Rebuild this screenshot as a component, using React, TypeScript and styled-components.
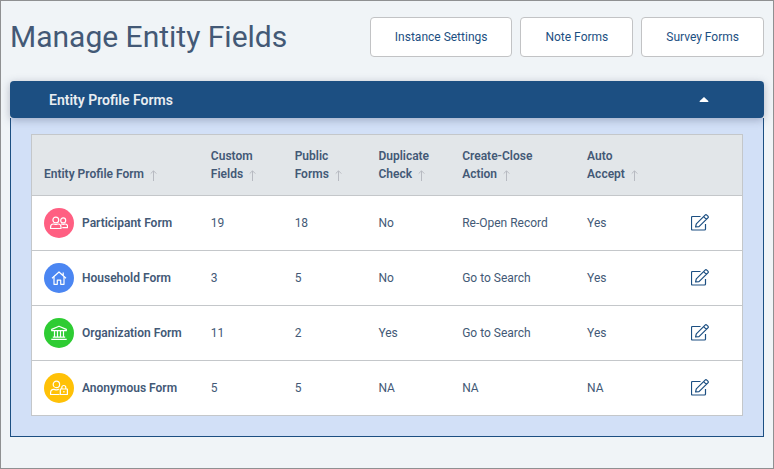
import React, { useState } from "react";
import styled, { createGlobalStyle } from "styled-components";

const navy = "#1c4f82";
const slate = "#435976";
const line = "#c4c7ca";

const GlobalStyle = createGlobalStyle`
  * { box-sizing: border-box; }
  html, body, #root { height: 100%; }
  body {
    margin: 0;
    background: #f0f4f7;
    color: ${slate};
    font-family: Roboto, "Liberation Sans", sans-serif;
    font-size: 12px;
    line-height: 18px;
  }
  button { font: inherit; color: inherit; cursor: pointer; }
`;

const Page = styled.main`
  min-height: 100%;
  padding: 16px 9px 24px;
  border: 1px solid #8f9092;
`;

const TopBar = styled.header`
  display: flex;
  align-items: center;
  justify-content: space-between;
  gap: 16px;
  margin-bottom: 24px;
`;

const Title = styled.h1`
  margin: 0;
  font-size: 30px;
  line-height: 40px;
  font-weight: 400;
  white-space: nowrap;
`;

const Actions = styled.nav`
  display: flex;
  gap: 8px;
`;

const ActionButton = styled.button`
  height: 40px;
  padding: 0 24px;
  border: 1px solid #c2c3c5;
  border-radius: 4px;
  background: #fff;
  color: ${navy};
  white-space: nowrap;
`;

const PanelToggle = styled.button`
  position: relative;
  display: flex;
  align-items: center;
  justify-content: space-between;
  width: 100%;
  height: 37px;
  padding: 0 55px 0 39px;
  border: 0;
  border-radius: 4px;
  background: ${navy};
  box-shadow: 0 2px 8px rgba(60, 70, 100, 0.35);
  color: #e9edf1;
  font-size: 14px;
  font-weight: 600;
  text-align: left;
`;

const PanelHeading = styled.span`
  white-space: nowrap;
`;

const Caret = styled.svg<{ $open: boolean }>`
  width: 10px;
  height: 5px;
  fill: #fff;
  transform: ${(p) => (p.$open ? "none" : "rotate(180deg)")};
`;

const PanelBody = styled.div`
  padding: 16px 20px 20px;
  border: 1px solid ${navy};
  border-top: 0;
  background: #d2e0f7;
`;

const Table = styled.table`
  width: 100%;
  table-layout: fixed;
  border: 1px solid ${line};
  border-spacing: 0;
  background: #fff;
`;

const Col = styled.col<{ $share: number }>`
  width: ${(p) => p.$share}%;
`;

const HeadCell = styled.th`
  height: 61px;
  padding: 12px 0 12px 12px;
  border-bottom: 1px solid ${line};
  background: #e2e6e9;
  text-align: left;
  vertical-align: bottom;
`;

const SortButton = styled.button`
  display: block;
  padding: 0;
  border: 0;
  background: none;
  font-weight: 600;
  text-align: left;
  white-space: nowrap;
`;

const SortArrow = styled.svg`
  width: 7px;
  height: 11px;
  margin-left: 6px;
  vertical-align: -3px;
  fill: none;
  stroke: #b7bac1;
`;

const Cell = styled.td`
  height: 55px;
  padding: 0 0 0 12px;
  border-bottom: 1px solid ${line};
  tr:last-child > & { border-bottom: 0; height: 54px; }
`;

const FormName = styled.div`
  display: flex;
  align-items: center;
  gap: 8px;
  font-weight: 600;
  white-space: nowrap;
`;

const Badge = styled.span<{ $color: string }>`
  display: flex;
  align-items: center;
  justify-content: center;
  flex: none;
  width: 30px;
  height: 30px;
  border-radius: 50%;
  background: ${(p) => p.$color};
`;

const Glyph = styled.svg`
  width: 18px;
  height: 18px;
  fill: none;
  stroke: #fff;
  stroke-width: 1.2;
  stroke-linejoin: round;
`;

const EditButton = styled.button`
  display: block;
  padding: 0;
  border: 0;
  background: none;
  color: ${navy};
`;

const EditGlyph = styled.svg`
  display: block;
  width: 18px;
  height: 18px;
  fill: none;
  stroke: currentColor;
  stroke-width: 1.2;
  stroke-linejoin: round;
`;

type Kind = "people" | "house" | "bank" | "lock";

const glyphs: Record<Kind, React.ReactNode> = {
  people: (
    <>
      <circle cx="5.8" cy="6" r="2.9" />
      <path d="M.6 14.5v-1.6c0-1.7 1.1-2.9 2.8-2.9.9 0 1.4.5 2.4.5s1.5-.5 2.4-.5c1.7 0 2.8 1.2 2.8 2.9v1.6z" />
      <circle cx="13.2" cy="6.4" r="2.5" />
      <path d="M11.1 10.3c.8-.4 1.3.1 2.1.1s1.2-.4 2-.4c1.4 0 2.3 1 2.3 2.3v1.4h-5.2" />
    </>
  ),
  house: (
    <>
      <path d="M2 9.2l7-6.2 7 6.2M13.2 6.5V3.6" />
      <path d="M4 7.8v7.5h3.3v-4.2h3.4v4.2H14V7.8" />
    </>
  ),
  bank: (
    <>
      <path d="M1.7 5.4L9 2.2l7.3 3.2v1.3H1.7z" />
      <path d="M4.5 7v6M7.5 7v6M10.5 7v6M13.5 7v6M2.8 13.1h12.4M1.3 15.4h15.4" />
    </>
  ),
  lock: (
    <>
      <circle cx="6.4" cy="5.4" r="3.2" />
      <path d="M9.6 15.5H.6v-1.7c0-2 1.2-3.4 3.1-3.4 1 0 1.6.5 2.7.5 1 0 1.5-.5 2.5-.5" />
      <path d="M10.3 10h7.1v5.5h-7.1zM11.8 10V8.5a2 2 0 0 1 4 0V10M13.9 12v1.6" />
    </>
  ),
};

const columns = [
  { lines: ["Entity Profile Form"], share: 23.5 },
  { lines: ["Custom", "Fields"], share: 11.8 },
  { lines: ["Public", "Forms"], share: 11.8 },
  { lines: ["Duplicate", "Check"], share: 11.8 },
  { lines: ["Create-Close", "Action"], share: 17.6 },
  { lines: ["Auto", "Accept"], share: 14.7 },
];

const rows: { name: string; kind: Kind; color: string; values: string[] }[] = [
  { name: "Participant Form", kind: "people", color: "#ff5f82", values: ["19", "18", "No", "Re-Open Record", "Yes"] },
  { name: "Household Form", kind: "house", color: "#4b86f2", values: ["3", "5", "No", "Go to Search", "Yes"] },
  { name: "Organization Form", kind: "bank", color: "#2ecc33", values: ["11", "2", "Yes", "Go to Search", "Yes"] },
  { name: "Anonymous Form", kind: "lock", color: "#ffc107", values: ["5", "5", "NA", "NA", "NA"] },
];

export default function App() {
  const [open, setOpen] = useState(true);
  return (
    <>
      <GlobalStyle />
      <Page>
        <TopBar>
          <Title>Manage Entity Fields</Title>
          <Actions>
            <ActionButton type="button">Instance Settings</ActionButton>
            <ActionButton type="button">Note Forms</ActionButton>
            <ActionButton type="button">Survey Forms</ActionButton>
          </Actions>
        </TopBar>
        <section>
          <PanelToggle type="button" aria-expanded={open} onClick={() => setOpen(!open)}>
            <PanelHeading>Entity Profile Forms</PanelHeading>
            <Caret $open={open} viewBox="0 0 10 5" aria-hidden="true">
              <path d="M5 0l4.3 4.1c.4.4.1.9-.4.9H1.1C.6 5 .3 4.5.7 4.1z" />
            </Caret>
          </PanelToggle>
          {open && (
            <PanelBody>
              <Table>
                <colgroup>
                  {columns.map((c) => (
                    <Col key={c.lines[0]} $share={c.share} />
                  ))}
                  <Col $share={8.8} />
                </colgroup>
                <thead>
                  <tr>
                    {columns.map((c) => (
                      <HeadCell key={c.lines[0]} scope="col">
                        <SortButton type="button">
                          {c.lines.map((text, i) => (
                            <React.Fragment key={text}>
                              {i > 0 && <br />}
                              {text}
                            </React.Fragment>
                          ))}
                          <SortArrow viewBox="0 0 7 11" aria-hidden="true">
                            <path d="M3.5 11V1M.7 3.6L3.5.8l2.8 2.8" />
                          </SortArrow>
                        </SortButton>
                      </HeadCell>
                    ))}
                    <HeadCell scope="col" aria-label="Edit" />
                  </tr>
                </thead>
                <tbody>
                  {rows.map((r) => (
                    <tr key={r.name}>
                      <Cell>
                        <FormName>
                          <Badge $color={r.color}>
                            <Glyph viewBox="0 0 18 18" aria-hidden="true">
                              {glyphs[r.kind]}
                            </Glyph>
                          </Badge>
                          {r.name}
                        </FormName>
                      </Cell>
                      {r.values.map((v, i) => (
                        <Cell key={i}>{v}</Cell>
                      ))}
                      <Cell>
                        <EditButton type="button" aria-label={`Edit ${r.name}`}>
                          <EditGlyph viewBox="0 0 18 18" aria-hidden="true">
                            <path d="M9.5 2.5H1.5c-.6 0-1 .4-1 1v11.5c0 .6.4 1 1 1h12c.6 0 1-.4 1-1v-5" />
                            <path d="M4.6 13l.7-3.1 8.8-8.8c.5-.5 1.2-.5 1.7 0l1.1 1.1c.5.5.5 1.2 0 1.7l-8.9 8.7zM12.6 2.6l2.8 2.8" />
                          </EditGlyph>
                        </EditButton>
                      </Cell>
                    </tr>
                  ))}
                </tbody>
              </Table>
            </PanelBody>
          )}
        </section>
      </Page>
    </>
  );
}
